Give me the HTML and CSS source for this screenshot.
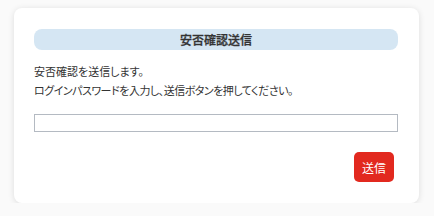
FILE: index.html
```html
<!DOCTYPE html>
<html lang="ja">
<head>
    <meta charset="UTF-8">
    <meta name="viewport" content="width=device-width, initial-scale=1.0">
    <title>安否確認送信</title>
    <link rel="stylesheet" href="styles.css">
</head>
<body>
    <div class="card">
        <div class="card-title">安否確認送信</div>
        <div class="message">
            <p>安否確認を送信します。</p>
            <p class="tight">ログインパスワードを入力し、送信ボタンを押してください。</p>
        </div>
        <input type="password" class="password" id="password">
        <div class="actions">
            <button class="send" id="send">送信</button>
        </div>
    </div>
</body>
</html>
```

FILE: styles.css
```css
body {
    margin: 0;
    padding: 8px 15px 0 14px;
    background: #fafafa;
    font-family: "Noto Sans CJK JP", "Noto Sans", sans-serif;
    color: #333;
}
.card {
    background: white;
    border-radius: 8px;
    box-shadow: 0 1px 6px rgba(0, 0, 0, 0.12);
    height: 195px;
    box-sizing: border-box;
    padding: 21px 21px 20px 20px;
}
.card-title {
    height: 21px;
    line-height: 21px;
    background: #d5e6f3;
    border-radius: 8px;
    text-align: center;
    font-size: 12px;
    font-weight: 500;
    color: #333;
    -webkit-text-stroke: 0.3px #333;
}
.message {
    margin-top: 12px;
    font-size: 11px;
    line-height: 19px;
    font-feature-settings: "palt";
}
.message p {
    margin: 0;
}
.message .tight {
    letter-spacing: -0.5px;
}
.password {
    display: block;
    width: 100%;
    height: 18px;
    box-sizing: border-box;
    margin-top: 14px;
    border: 1px solid #b4bac2;
    border-radius: 0;
    padding: 0 4px;
}
.actions {
    display: flex;
    justify-content: flex-end;
    margin-top: 20px;
    padding-right: 4px;
}
.send {
    width: 40px;
    height: 30px;
    border: none;
    border-radius: 5px;
    background: #e2291f;
    color: white;
    font-family: inherit;
    font-size: 12px;
    padding: 0;
    cursor: pointer;
}
.send:hover {
    background: #c8231a;
}
```
